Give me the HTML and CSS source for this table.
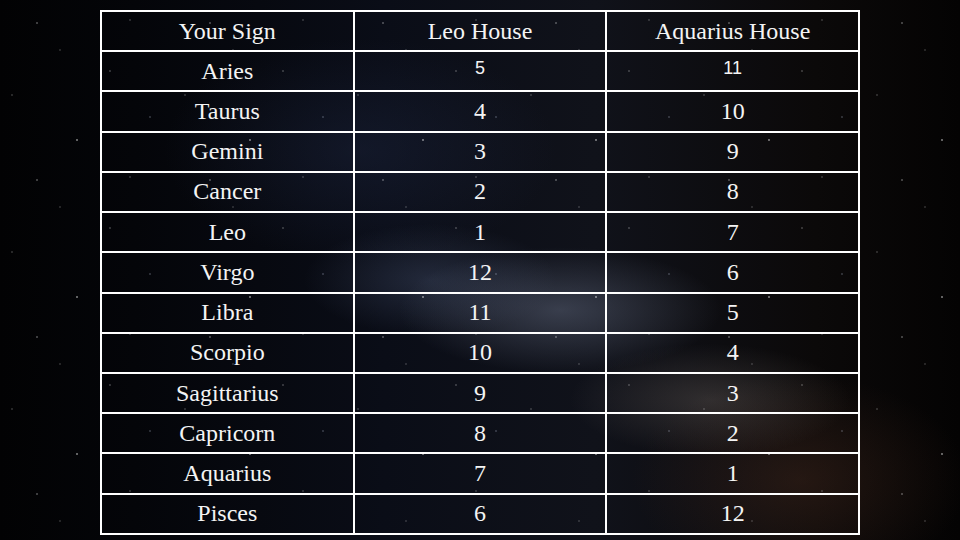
FILE: index.html
```html
<!DOCTYPE html>
<html>
<head>
<meta charset="utf-8">
<link rel="stylesheet" href="styles.css">
</head>
<body>
<div class="sky">
  <table class="houses">
    <tr><th>Your Sign</th><th>Leo House</th><th>Aquarius House</th></tr>
    <tr><td>Aries</td><td class="sans">5</td><td class="sans">11</td></tr>
    <tr><td>Taurus</td><td>4</td><td>10</td></tr>
    <tr><td>Gemini</td><td>3</td><td>9</td></tr>
    <tr><td>Cancer</td><td>2</td><td>8</td></tr>
    <tr><td>Leo</td><td>1</td><td>7</td></tr>
    <tr><td>Virgo</td><td>12</td><td>6</td></tr>
    <tr><td>Libra</td><td>11</td><td>5</td></tr>
    <tr><td>Scorpio</td><td>10</td><td>4</td></tr>
    <tr><td>Sagittarius</td><td>9</td><td>3</td></tr>
    <tr><td>Capricorn</td><td>8</td><td>2</td></tr>
    <tr><td>Aquarius</td><td>7</td><td>1</td></tr>
    <tr><td>Pisces</td><td>6</td><td>12</td></tr>
  </table>
</div>
</body>
</html>
```
FILE: styles.css
```css
html, body {
  margin: 0;
  padding: 0;
  width: 960px;
  height: 540px;
  overflow: hidden;
  background: #040406;
}
.sky {
  width: 960px;
  height: 540px;
  box-sizing: border-box;
  padding: 10px 0 0 100px;
  background:
    radial-gradient(1px 1px at 37px 23px, rgba(255,255,255,0.8), transparent),
    radial-gradient(1px 1px at 110px 71px, rgba(255,255,255,0.6), transparent),
    radial-gradient(1.5px 1.5px at 77px 140px, rgba(255,255,255,0.7), transparent),
    radial-gradient(1px 1px at 150px 117px, rgba(220,230,255,0.6), transparent),
    radial-gradient(1px 1px at 12px 95px, rgba(255,255,255,0.5), transparent),
    radial-gradient(1px 1px at 60px 50px, rgba(255,255,255,0.45), transparent),
    radial-gradient(1px 1px at 130px 20px, rgba(255,255,255,0.5), transparent),
    radial-gradient(ellipse 230px 90px at 560px 310px, rgba(125,135,160,0.38), transparent 70%),
    radial-gradient(ellipse 180px 80px at 430px 280px, rgba(90,105,140,0.30), transparent 70%),
    radial-gradient(ellipse 200px 80px at 710px 400px, rgba(130,120,115,0.30), transparent 70%),
    radial-gradient(ellipse 240px 150px at 800px 480px, rgba(85,50,35,0.35), transparent 70%),
    radial-gradient(ellipse 280px 160px at 360px 150px, rgba(35,45,75,0.35), transparent 70%),
    linear-gradient(90deg, #020203 0%, #040509 14%, #0a0d17 40%, #10121a 62%, #0b0909 85%, #040303 100%);
  background-size:
    173px 157px, 173px 157px, 173px 157px, 173px 157px, 173px 157px, 173px 157px, 173px 157px,
    auto, auto, auto, auto, auto, auto;
  background-repeat:
    repeat, repeat, repeat, repeat, repeat, repeat, repeat,
    no-repeat, no-repeat, no-repeat, no-repeat, no-repeat, no-repeat;
}
.houses {
  border-collapse: collapse;
  width: 760px;
  height: 525px;
  table-layout: fixed;
  font-family: "Liberation Serif", "DejaVu Serif", serif;
  font-size: 24px;
  color: #f4f4f4;
}
.houses th,
.houses td {
  border: 2px solid #ffffff;
  text-align: center;
  vertical-align: middle;
  font-weight: normal;
  padding: 0 0 1px 0;
  line-height: 1;
}
.houses td.sans {
  font-family: "Liberation Sans", Arial, sans-serif;
  font-size: 18px;
  padding-bottom: 6px;
}
```
